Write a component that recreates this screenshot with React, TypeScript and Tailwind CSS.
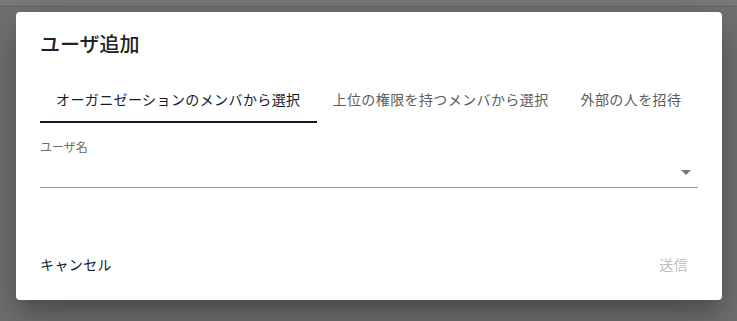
import React from "react";

const font = { fontFamily: '"Noto Sans CJK JP", "Noto Sans", sans-serif' };

export default function App() {
  return (
    <div
      className="relative h-[321px] w-full overflow-hidden bg-[#727272]"
      style={font}
    >
      <div className="h-[7px] border-b border-[#666666] bg-[#7a7a7a]" />
      <div className="absolute left-[16px] top-[12px] flex h-[288px] w-[706px] flex-col rounded bg-white shadow-[0px_11px_15px_-7px_rgba(0,0,0,0.2),0px_24px_38px_3px_rgba(0,0,0,0.14),0px_9px_46px_8px_rgba(0,0,0,0.12)]">
        <div className="px-6 pb-[15px] pt-4 text-[20px] font-medium leading-8 text-[#222222]">
          ユーザ追加
        </div>
        <div className="flex px-6">
          <div className="flex h-12 items-center border-b-2 border-[#0f1c2b] px-4 pt-[2px] text-[14px] font-normal tracking-[0.4px] text-[#0f1c2b]">
            オーガニゼーションのメンバから選択
          </div>
          <div className="flex h-12 items-center px-4 text-[14px] font-normal tracking-[0.4px] text-[#5c5c5c]">
            上位の権限を持つメンバから選択
          </div>
          <div className="flex h-12 items-center px-4 text-[14px] font-normal tracking-[0.4px] text-[#5c5c5c]">
            外部の人を招待
          </div>
        </div>
        <div className="mx-6 mt-4 flex flex-col">
          <div className="text-[12px] leading-4 text-[#6b6b6b]">ユーザ名</div>
          <div className="flex h-[33px] items-center justify-end border-b border-[#949494]">
            <svg
              width="24"
              height="24"
              viewBox="0 0 24 24"
              className="mt-[1px] fill-[#757575]"
            >
              <path d="M7 10l5 5 5-5z" />
            </svg>
          </div>
        </div>
        <div className="mt-auto flex items-center justify-between pb-[18px] pl-6 pr-[34px]">
          <button className="h-9 text-[14px] font-normal tracking-[0.4px] text-[#0f1c2b]">
            キャンセル
          </button>
          <button
            disabled
            className="h-9 text-[14px] font-normal tracking-[0.4px] text-[#bdbdbd]"
          >
            送信
          </button>
        </div>
      </div>
    </div>
  );
}
